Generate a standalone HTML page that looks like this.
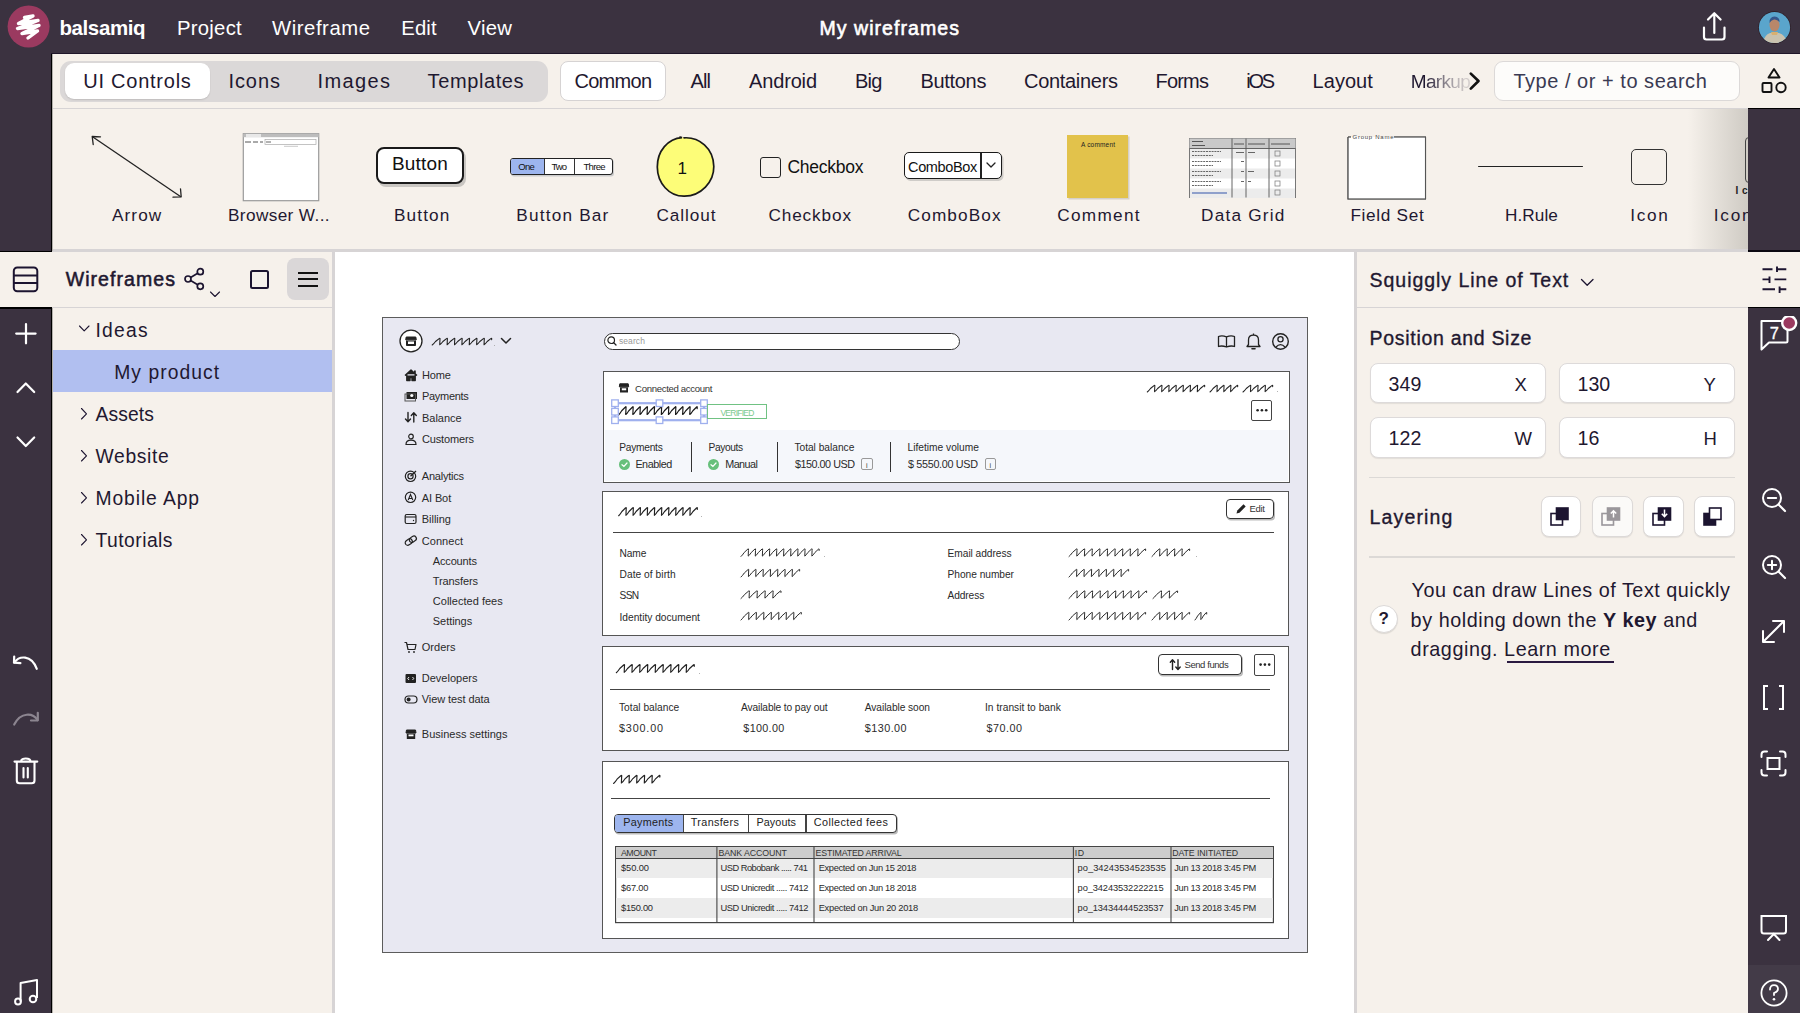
<!DOCTYPE html>
<html><head><meta charset="utf-8"><title>balsamiq</title>
<style>
html,body{margin:0;padding:0;}
body{width:1800px;height:1013px;overflow:hidden;background:#3b3240;position:relative;font-family:"Liberation Sans",sans-serif;}
.a{position:absolute;display:block;}
.t{position:absolute;white-space:nowrap;line-height:1;}
</style></head><body>
<div class="a" style="left:52px;top:54px;width:1748px;height:55px;background:#f6f1eb;"></div>
<div class="a" style="left:52px;top:108px;width:1748px;height:1px;background:#d7d4d5;"></div>
<div class="a" style="left:52px;top:109px;width:1696px;height:141px;background:#f6f1eb;"></div>
<div class="a" style="left:1688px;top:109px;width:60px;height:141px;background:linear-gradient(90deg, rgba(246,241,235,0), #cfcbc4);"></div>
<div class="a" style="left:52px;top:249px;width:1696px;height:3px;background:#d7d4d5;"></div>
<div class="a" style="left:1748px;top:249.5px;width:52px;height:2.5px;background:#0c0812;"></div>
<div class="a" style="left:51px;top:54px;width:1px;height:197px;background:#000;"></div>
<div class="a" style="left:52px;top:54px;width:1px;height:197px;background:#b5b2ad;"></div>
<div class="a" style="left:0px;top:250.5px;width:52px;height:1.5px;background:#000;"></div>
<div class="a" style="left:0px;top:252px;width:333px;height:55px;background:#f6f1eb;"></div>
<div class="a" style="left:0px;top:307px;width:333px;height:1px;background:#d7d4d5;"></div>
<div class="a" style="left:0px;top:307px;width:52px;height:1.5px;background:#000;"></div>
<div class="a" style="left:52px;top:308px;width:280px;height:705px;background:#f6f1eb;"></div>
<div class="a" style="left:51px;top:308px;width:1px;height:705px;background:#000;"></div>
<div class="a" style="left:52px;top:308px;width:1px;height:705px;background:#b5b2ad;"></div>
<div class="a" style="left:332px;top:252px;width:3px;height:761px;background:#d7d4d5;"></div>
<div class="a" style="left:335px;top:252px;width:1019px;height:761px;background:#ffffff;"></div>
<div class="a" style="left:1354px;top:252px;width:3px;height:761px;background:#d7d4d5;"></div>
<div class="a" style="left:1357px;top:252px;width:443px;height:55px;background:#f6f1eb;"></div>
<div class="a" style="left:1357px;top:307px;width:391px;height:706px;background:#f6f1eb;"></div>
<div class="a" style="left:1357px;top:307px;width:443px;height:1px;background:#d7d4d5;"></div>
<div class="a" style="left:1748px;top:108px;width:52px;height:1.2px;background:#000;"></div>
<div class="a" style="left:1747.5px;top:108px;width:1.2px;height:143px;background:#000;"></div>
<div class="a" style="left:1748px;top:306.5px;width:52px;height:1px;background:#000;"></div>
<div class="a" style="left:1748px;top:965px;width:52px;height:48px;background:#433b48;"></div>
<div class="a" style="left:51px;top:52.6px;width:1749px;height:1.5px;background:#1f1629;"></div>
<svg class="a" style="left:6px;top:5px" width="44" height="44" viewBox="0 0 44 44">
<circle cx="22.6" cy="21.5" r="21" fill="#9b3a60"/>
<path d="M18.5,12.5 L27,11 L12.5,18.5 L32,15.5 L11.5,23.5 L33,20.5 L16,28.5 L31.5,26 L22,33" fill="none" stroke="#fff" stroke-width="3.4" stroke-linecap="round" stroke-linejoin="round"/>
</svg>
<div class="t" style="left:59.40px;top:18.00px;font-size:20.50px;letter-spacing:-0.381px;font-weight:bold;color:#fff;">balsamiq</div>
<div class="t" style="left:177.00px;top:18.00px;font-size:20.30px;letter-spacing:0.261px;color:#fff;">Project</div>
<div class="t" style="left:272.00px;top:18.00px;font-size:20.30px;letter-spacing:0.552px;color:#fff;">Wireframe</div>
<div class="t" style="left:401.30px;top:18.00px;font-size:20.30px;letter-spacing:0.128px;color:#fff;">Edit</div>
<div class="t" style="left:467.50px;top:18.00px;font-size:20.30px;letter-spacing:0.285px;color:#fff;">View</div>
<div class="t" style="left:819.40px;top:19.00px;font-size:19.50px;letter-spacing:1.062px;color:#fff;-webkit-text-stroke:0.6px #fff;">My wireframes</div>
<svg class="a" style="left:1700px;top:10px;" width="30" height="34" viewBox="0 0 30 34"><path d="M14.3,23 V3.5 M8,9.5 L14.3,3.2 L20.6,9.5" fill="none" stroke="#fff" stroke-width="2.2" stroke-linecap="round" stroke-linejoin="round"/><path d="M4,17.5 V27 Q4,29.5 6.5,29.5 H22 Q24.5,29.5 24.5,27 V17.5" fill="none" stroke="#fff" stroke-width="2.2" stroke-linecap="round"/></svg>
<svg class="a" style="left:1758px;top:11px" width="33" height="33" viewBox="0 0 33 33">
<defs><clipPath id="av"><circle cx="16.5" cy="16.5" r="15.6"/></clipPath></defs>
<circle cx="16.5" cy="16.5" r="16.2" fill="#2a1a20"/>
<g clip-path="url(#av)">
<rect width="33" height="33" fill="#5aa5cc"/>
<path d="M4,34 Q6,24 12,22 L21,22 Q28,24 30,34 Z" fill="#c9c2ae"/>
<path d="M13,21 L20,21 L19,24 L14,24 Z" fill="#d8b070"/>
<ellipse cx="16.5" cy="14" rx="5" ry="6.5" fill="#b8876a"/>
<path d="M11.5,12 Q11,6 16.5,5.5 Q22,6 21.5,11 Q19,8 16,8.5 Q13,9 11.5,12 Z" fill="#35568a"/>
</g></svg>
<div class="a" style="left:59.5px;top:60.5px;width:488px;height:41.5px;background:#dbd8d8;border-radius:11px;"></div>
<div class="a" style="left:64.7px;top:63.3px;width:145px;height:36px;background:#fff;border-radius:9px;box-shadow:0 1px 1.5px rgba(0,0,0,0.12);"></div>
<div class="t" style="left:83.30px;top:71.00px;font-size:20.00px;letter-spacing:0.750px;color:#1f1830;">UI Controls</div>
<div class="t" style="left:228.40px;top:71.00px;font-size:20.00px;letter-spacing:0.950px;color:#1f1830;">Icons</div>
<div class="t" style="left:317.60px;top:71.00px;font-size:20.00px;letter-spacing:1.360px;color:#1f1830;">Images</div>
<div class="t" style="left:427.60px;top:71.00px;font-size:20.00px;letter-spacing:0.600px;color:#1f1830;">Templates</div>
<div class="a" style="left:560.4px;top:60.6px;width:105.2px;height:40.8px;background:#fff;border-radius:8px;box-sizing:border-box;border:1px solid #d6d3d3;"></div>
<div class="t" style="left:574.40px;top:71.00px;font-size:20.00px;letter-spacing:-0.700px;color:#1f1830;">Common</div>
<div class="t" style="left:690.60px;top:71.00px;font-size:20.00px;letter-spacing:-0.900px;color:#1f1830;">All</div>
<div class="t" style="left:749.00px;top:71.00px;font-size:20.00px;letter-spacing:-0.150px;color:#1f1830;">Android</div>
<div class="t" style="left:855.00px;top:71.00px;font-size:20.00px;letter-spacing:-0.750px;color:#1f1830;">Big</div>
<div class="t" style="left:920.40px;top:71.00px;font-size:20.00px;letter-spacing:-0.300px;color:#1f1830;">Buttons</div>
<div class="t" style="left:1024.00px;top:71.00px;font-size:20.00px;letter-spacing:-0.300px;color:#1f1830;">Containers</div>
<div class="t" style="left:1155.60px;top:71.00px;font-size:20.00px;letter-spacing:-0.825px;color:#1f1830;">Forms</div>
<div class="t" style="left:1246.30px;top:71.00px;font-size:20.00px;letter-spacing:-2.300px;color:#1f1830;">iOS</div>
<div class="t" style="left:1312.60px;top:71.00px;font-size:20.00px;letter-spacing:0.020px;color:#1f1830;">Layout</div>
<div class="t" style="left:1410.80px;top:72.00px;font-size:19.00px;letter-spacing:-0.673px;color:#1f1830;-webkit-mask-image:linear-gradient(90deg,#000 0px,#000 14px,rgba(0,0,0,0.55) 32px,rgba(0,0,0,0.3) 45px,rgba(0,0,0,0.12) 60px);">Markup</div>
<svg class="a" style="left:1466px;top:69px;" width="18" height="24" viewBox="0 0 18 24"><path d="M4.8,4.6 L12.5,12 L4.8,19.6" fill="none" stroke="#111" stroke-width="2.7" stroke-linecap="round" stroke-linejoin="round"/></svg>
<div class="a" style="left:1494.4px;top:60.5px;width:246px;height:40.3px;background:#fdfcfa;border-radius:9px;box-sizing:border-box;border:1px solid #dcd9d8;"></div>
<div class="t" style="left:1513.40px;top:71.00px;font-size:20.00px;letter-spacing:0.525px;color:#3a3a52;">Type / or + to search</div>
<svg class="a" style="left:1759px;top:66px;" width="30" height="30" viewBox="0 0 30 30"><path d="M15,3 L20.5,11.5 H9.5 Z" fill="none" stroke="#111" stroke-width="1.9" stroke-linejoin="round"/><rect x="3.5" y="17" width="9" height="9" rx="1" fill="none" stroke="#111" stroke-width="1.9"/><circle cx="22" cy="21.5" r="4.7" fill="none" stroke="#111" stroke-width="1.9"/></svg>
<div class="t" style="left:112.00px;top:207.00px;font-size:17.20px;letter-spacing:1.080px;color:#1f1830;">Arrow</div>
<div class="t" style="left:228.00px;top:207.00px;font-size:17.20px;letter-spacing:0.380px;color:#1f1830;">Browser W...</div>
<div class="t" style="left:393.90px;top:207.00px;font-size:17.20px;letter-spacing:1.158px;color:#1f1830;">Button</div>
<div class="t" style="left:516.30px;top:207.00px;font-size:17.20px;letter-spacing:1.203px;color:#1f1830;">Button Bar</div>
<div class="t" style="left:656.50px;top:207.00px;font-size:17.20px;letter-spacing:0.920px;color:#1f1830;">Callout</div>
<div class="t" style="left:768.40px;top:207.00px;font-size:17.20px;letter-spacing:0.892px;color:#1f1830;">Checkbox</div>
<div class="t" style="left:907.70px;top:207.00px;font-size:17.20px;letter-spacing:1.121px;color:#1f1830;">ComboBox</div>
<div class="t" style="left:1057.30px;top:207.00px;font-size:17.20px;letter-spacing:1.290px;color:#1f1830;">Comment</div>
<div class="t" style="left:1201.10px;top:207.00px;font-size:17.20px;letter-spacing:1.210px;color:#1f1830;">Data Grid</div>
<div class="t" style="left:1350.40px;top:207.00px;font-size:17.20px;letter-spacing:0.693px;color:#1f1830;">Field Set</div>
<div class="t" style="left:1504.90px;top:207.00px;font-size:17.20px;letter-spacing:0.091px;color:#1f1830;">H.Rule</div>
<div class="t" style="left:1630.20px;top:207.00px;font-size:17.20px;letter-spacing:1.731px;color:#1f1830;">Icon</div>
<div class="t" style="left:1713.80px;top:207.00px;font-size:17.20px;letter-spacing:1.731px;color:#1f1830;">Icon</div>
<svg class="a" style="left:85px;top:130px;" width="105" height="75" viewBox="0 0 105 75"><path d="M7.5,6.7 L95.8,66.7" stroke="#222" stroke-width="1.3" fill="none"/><path d="M8.2,14.5 L7.2,6.5 L15.5,6.8" fill="none" stroke="#222" stroke-width="1.3" stroke-linecap="round" stroke-linejoin="round"/><path d="M95.5,58.8 L96.2,66.8 L88,67.2" fill="none" stroke="#222" stroke-width="1.3" stroke-linecap="round" stroke-linejoin="round"/></svg>
<svg class="a" style="left:242px;top:133px;" width="78" height="69" viewBox="0 0 78 69"><rect x="1.3" y="0.7" width="75.4" height="67" fill="#fff" stroke="#9a9a9a" stroke-width="1.2"/>
<rect x="1.3" y="0.7" width="75.4" height="3.5" fill="#bdbdbd"/><rect x="4" y="1" width="15" height="3" fill="#e8e8e8"/>
<path d="M3,9 H9 M11,9 H16 M18,9 H21" stroke="#555" stroke-width="1"/><rect x="23" y="6.5" width="51" height="5" fill="#fff" stroke="#aaa" stroke-width="0.7"/>
<path d="M24,9 H29" stroke="#666" stroke-width="1"/><path d="M42,13.3 H56" stroke="#bbb" stroke-width="0.8"/></svg>
<div class="a" style="left:376px;top:146.5px;width:88px;height:37px;box-sizing:border-box;border:2px solid #1a1a1a;border-radius:8px;background:#fff;box-shadow:2px 3px 0 #c9c6c2;"></div>
<div class="t" style="left:391.90px;top:154.00px;font-size:19.00px;letter-spacing:0.218px;color:#111;">Button</div>
<div class="a" style="left:510px;top:158.3px;width:102.7px;height:16.3px;box-sizing:border-box;border:1.3px solid #222;border-radius:3px;background:#fff;overflow:hidden;box-shadow:1px 1.5px 0 #ccc;"><div style="position:absolute;left:0;top:0;width:33px;height:100%;background:#9db5ee;border-right:1.2px solid #333"></div><div style="position:absolute;left:62.5px;top:0;width:1.2px;height:100%;background:#333"></div></div>
<div class="t" style="left:518.30px;top:162.00px;font-size:9.50px;letter-spacing:-0.727px;color:#111;">One</div>
<div class="t" style="left:551.50px;top:162.00px;font-size:9.50px;letter-spacing:-0.966px;color:#111;">Two</div>
<div class="t" style="left:583.50px;top:162.00px;font-size:9.50px;letter-spacing:-0.699px;color:#111;">Three</div>
<svg class="a" style="left:655px;top:135px;" width="62" height="64" viewBox="0 0 62 64"><path d="M29,2.8 C44,1.8 58.5,13 58.8,31.5 C59,47 46,61 29.5,61.2 C14,61.5 2.4,48 2.3,32 C2.2,16 13,3.5 27,2.6 L25,2" fill="#fdfd78" stroke="#1a1a1a" stroke-width="1.7" stroke-linecap="round"/></svg>
<div class="t" style="left:677.50px;top:160.00px;font-size:17.00px;color:#111;">1</div>
<div class="a" style="left:760px;top:156.7px;width:21px;height:21px;box-sizing:border-box;border:1.6px solid #222;border-radius:3px;"></div>
<div class="t" style="left:787.40px;top:159.00px;font-size:17.50px;letter-spacing:-0.255px;color:#111;">Checkbox</div>
<div class="a" style="left:903.5px;top:152.4px;width:98.5px;height:26.4px;box-sizing:border-box;border:1.6px solid #1a1a1a;border-radius:5px;background:#fff;box-shadow:1.5px 2px 0 #cfccc8;"><div style="position:absolute;left:75.5px;top:0;width:1.6px;height:100%;background:#222"></div></div>
<div class="t" style="left:908.00px;top:160.00px;font-size:14.50px;letter-spacing:-0.343px;color:#111;">ComboBox</div>
<svg class="a" style="left:983px;top:158px;" width="16" height="14" viewBox="0 0 16 14"><path d="M4,5 L8,9 L12,5" fill="none" stroke="#222" stroke-width="1.3" stroke-linecap="round" stroke-linejoin="round"/></svg>
<div class="a" style="left:1067.1px;top:135.4px;width:61.3px;height:62.5px;background:#e2c24b;box-shadow:1.5px 1.5px 0 #d5d0c8;"></div>
<div class="t" style="left:1081.00px;top:142.00px;font-size:6.50px;letter-spacing:0.188px;color:#222;">A comment</div>
<svg class="a" style="left:1189px;top:137.5px;" width="107" height="60" viewBox="0 0 107 60"><rect x="0.5" y="0.5" width="106" height="59" fill="#fff" stroke="#777" stroke-width="1"/><rect x="0.5" y="0.5" width="106" height="10" fill="#c9c9c9"/><rect x="1" y="10.5" width="105" height="10" fill="#ececec"/><rect x="1" y="30.5" width="105" height="10" fill="#ececec"/><rect x="1" y="50.5" width="105" height="10" fill="#ececec"/><path d="M43,0.5 V59.5" stroke="#555" stroke-width="0.9"/><path d="M57,0.5 V59.5" stroke="#555" stroke-width="0.9"/><path d="M80,0.5 V59.5" stroke="#555" stroke-width="0.9"/><path d="M0.5,10.5 H106.5" stroke="#555" stroke-width="0.9"/><path d="M3,13.5 H32 M3,17.5 H24" stroke="#666" stroke-width="1.1" stroke-dasharray="2 0.8"/><rect x="86" y="13.0" width="5" height="5" fill="none" stroke="#777" stroke-width="0.7"/><path d="M3,23.5 H32 M3,27.5 H24" stroke="#666" stroke-width="1.1" stroke-dasharray="2 0.8"/><rect x="86" y="23.0" width="5" height="5" fill="none" stroke="#777" stroke-width="0.7"/><path d="M3,33.5 H32 M3,37.5 H24" stroke="#666" stroke-width="1.1" stroke-dasharray="2 0.8"/><rect x="86" y="33.0" width="5" height="5" fill="none" stroke="#777" stroke-width="0.7"/><path d="M3,43.5 H32 M3,47.5 H24" stroke="#666" stroke-width="1.1" stroke-dasharray="2 0.8"/><rect x="86" y="43.0" width="5" height="5" fill="none" stroke="#777" stroke-width="0.7"/><path d="M3,55 H38" stroke="#3355aa" stroke-width="1"/><rect x="86" y="52" width="5" height="5" fill="none" stroke="#777" stroke-width="0.7"/><path d="M3,3.5 H14 M3,7.5 H16 M45,6 H55 M59,6 H76 M82,6 H101" stroke="#555" stroke-width="1"/><path d="M47,14.5 H55 M59,14.5 H66 M59,33.5 H65 M59,43.5 H62 M52,23.5 H55 M52,33.5 H55 M52,43.5 H55" stroke="#666" stroke-width="1"/></svg>
<svg class="a" style="left:1347px;top:135px;" width="80" height="66" viewBox="0 0 80 66"><path d="M1,2 H4 M47,2 H78.5 V64 H1 V2" fill="#fff" stroke="#555" stroke-width="1.1"/><rect x="1.5" y="2.5" width="76.5" height="61" fill="#fff"/><path d="M1,2 H4 M47,2 H78.5 V64 H1 V2" fill="none" stroke="#555" stroke-width="1.1"/></svg>
<div class="t" style="left:1352.50px;top:134.00px;font-size:6.00px;letter-spacing:0.739px;color:#444;">Group Name</div>
<div class="a" style="left:1477.7px;top:165.7px;width:105px;height:1.6px;background:#222;border-radius:1px;"></div>
<div class="a" style="left:1631px;top:149px;width:36.2px;height:35.6px;box-sizing:border-box;border:1.3px solid #333;border-radius:5px;"></div>
<div class="a" style="left:1744.5px;top:137px;width:20px;height:46px;box-sizing:border-box;border:1.2px solid #444;border-radius:4px;"></div>
<div class="t" style="left:1735.50px;top:186.00px;font-size:10.00px;letter-spacing:3.650px;font-weight:bold;color:#222;">Ic</div>
<div class="a" style="left:1748px;top:109.2px;width:52px;height:141.3px;background:#3b3240;"></div>
<svg class="a" style="left:12px;top:266px;" width="27" height="27" viewBox="0 0 27 27"><rect x="1.8" y="1.5" width="23.5" height="23.8" rx="3.5" fill="none" stroke="#1c1430" stroke-width="2"/><path d="M1.8,9.4 H25.3 M1.8,17.1 H25.3" stroke="#1c1430" stroke-width="2"/></svg>
<div class="t" style="left:65.70px;top:270.00px;font-size:19.50px;letter-spacing:1.062px;color:#1f1830;-webkit-text-stroke:0.55px #1f1830;">Wireframes</div>
<svg class="a" style="left:183px;top:267px;" width="24" height="25" viewBox="0 0 24 25"><circle cx="17.3" cy="4.7" r="3" fill="none" stroke="#1c1430" stroke-width="1.7"/><circle cx="5" cy="12" r="3" fill="none" stroke="#1c1430" stroke-width="1.7"/><circle cx="17.3" cy="19.3" r="3" fill="none" stroke="#1c1430" stroke-width="1.7"/><path d="M7.6,10.4 L14.7,6.3 M7.6,13.6 L14.7,17.7" stroke="#1c1430" stroke-width="1.7"/></svg>
<svg class="a" style="left:208px;top:289px;" width="14" height="10" viewBox="0 0 14 10"><path d="M2.5,3 L7,7.5 L11.5,3" fill="none" stroke="#1c1430" stroke-width="1.1" stroke-linecap="round" stroke-linejoin="round"/></svg>
<div class="a" style="left:250.3px;top:270px;width:19.2px;height:18.6px;box-sizing:border-box;border:2px solid #1c1430;border-radius:2.5px;"></div>
<div class="a" style="left:287px;top:258.4px;width:41.5px;height:41.7px;background:#dad7d8;border-radius:8px;"></div>
<div class="a" style="left:298px;top:272.4px;width:19.6px;height:2px;background:#111;"></div>
<div class="a" style="left:298px;top:278.4px;width:19.6px;height:2px;background:#111;"></div>
<div class="a" style="left:298px;top:284.5px;width:19.6px;height:2px;background:#111;"></div>
<div class="a" style="left:52.5px;top:350.3px;width:279.5px;height:41.8px;background:#b1bff0;"></div>
<div class="t" style="left:95.50px;top:321.00px;font-size:19.30px;letter-spacing:1.253px;color:#1f1830;">Ideas</div>
<div class="t" style="left:114.20px;top:363.00px;font-size:19.30px;letter-spacing:1.051px;color:#1f1830;">My product</div>
<div class="t" style="left:95.50px;top:405.00px;font-size:19.30px;letter-spacing:0.120px;color:#1f1830;">Assets</div>
<div class="t" style="left:95.50px;top:447.00px;font-size:19.30px;letter-spacing:0.669px;color:#1f1830;">Website</div>
<div class="t" style="left:95.50px;top:489.00px;font-size:19.30px;letter-spacing:0.907px;color:#1f1830;">Mobile App</div>
<div class="t" style="left:95.50px;top:531.00px;font-size:19.30px;letter-spacing:0.470px;color:#1f1830;">Tutorials</div>
<svg class="a" style="left:76px;top:322px;" width="16" height="14" viewBox="0 0 16 14"><path d="M3.5,4 L8.2,8.8 L13,4" fill="none" stroke="#1c1430" stroke-width="1.1" stroke-linecap="round" stroke-linejoin="round"/></svg>
<svg class="a" style="left:78px;top:406.5px;" width="12" height="14" viewBox="0 0 12 14"><path d="M3.5,1.5 L8.5,6.8 L3.5,12" fill="none" stroke="#1c1430" stroke-width="1.1" stroke-linecap="round" stroke-linejoin="round"/></svg>
<svg class="a" style="left:78px;top:448.5px;" width="12" height="14" viewBox="0 0 12 14"><path d="M3.5,1.5 L8.5,6.8 L3.5,12" fill="none" stroke="#1c1430" stroke-width="1.1" stroke-linecap="round" stroke-linejoin="round"/></svg>
<svg class="a" style="left:78px;top:490.5px;" width="12" height="14" viewBox="0 0 12 14"><path d="M3.5,1.5 L8.5,6.8 L3.5,12" fill="none" stroke="#1c1430" stroke-width="1.1" stroke-linecap="round" stroke-linejoin="round"/></svg>
<svg class="a" style="left:78px;top:532.5px;" width="12" height="14" viewBox="0 0 12 14"><path d="M3.5,1.5 L8.5,6.8 L3.5,12" fill="none" stroke="#1c1430" stroke-width="1.1" stroke-linecap="round" stroke-linejoin="round"/></svg>
<svg class="a" style="left:13px;top:321px;" width="26" height="26" viewBox="0 0 26 26"><path d="M13,3 V22.3 M3.2,12.6 H22.6" stroke="#fff" stroke-width="2.2" stroke-linecap="round"/></svg>
<svg class="a" style="left:13px;top:378px;" width="26" height="20" viewBox="0 0 26 20"><path d="M4.5,14 L12.8,5.5 L21.2,14" fill="none" stroke="#fff" stroke-width="2.2" stroke-linecap="round" stroke-linejoin="round"/></svg>
<svg class="a" style="left:13px;top:432px;" width="26" height="20" viewBox="0 0 26 20"><path d="M4.5,5.5 L12.8,14 L21.2,5.5" fill="none" stroke="#fff" stroke-width="2.2" stroke-linecap="round" stroke-linejoin="round"/></svg>
<svg class="a" style="left:11px;top:652px;" width="30" height="22" viewBox="0 0 30 22"><path d="M3.5,10.3 C8,4 20,2 25.8,16.8" fill="none" stroke="#fff" stroke-width="2.2" stroke-linecap="round"/><path d="M3.2,4.5 L3,10.7 L9.4,11.2" fill="none" stroke="#fff" stroke-width="2.2" stroke-linecap="round" stroke-linejoin="round"/></svg>
<svg class="a" style="left:11px;top:708px;" width="30" height="22" viewBox="0 0 30 22"><path d="M26.5,12 C22,5 10,3.5 3.2,16.5" fill="none" stroke="#8c8590" stroke-width="2.2" stroke-linecap="round"/><path d="M26.8,4.8 L26.8,12.3 L20,12.5" fill="none" stroke="#8c8590" stroke-width="2.2" stroke-linecap="round" stroke-linejoin="round"/></svg>
<svg class="a" style="left:11px;top:756px;" width="30" height="32" viewBox="0 0 30 32"><path d="M3.5,5.6 H26.3 M10,5.4 C10,1.5 19.5,1.5 19.5,5.4" fill="none" stroke="#fff" stroke-width="2.1" stroke-linecap="round"/><path d="M5.8,6 V24.5 Q5.8,27.3 8.6,27.3 H20.7 Q23.5,27.3 23.5,24.5 V6" fill="none" stroke="#fff" stroke-width="2.1"/><path d="M12.5,12 V21.5 M16.8,12 V21.5" stroke="#fff" stroke-width="2.1" stroke-linecap="round"/></svg>
<svg class="a" style="left:11px;top:978px;" width="30" height="30" viewBox="0 0 30 30"><path d="M9.6,23.5 V5 L26,2 V20" fill="none" stroke="#fff" stroke-width="2" stroke-linejoin="round"/><circle cx="7" cy="23.5" r="2.9" fill="none" stroke="#fff" stroke-width="2"/><circle cx="22" cy="21" r="3.3" fill="none" stroke="#fff" stroke-width="2"/></svg>
<div class="t" style="left:1369.60px;top:271.00px;font-size:19.50px;letter-spacing:0.955px;color:#1f1830;-webkit-text-stroke:0.35px #1f1830;">Squiggly Line of Text</div>
<svg class="a" style="left:1578px;top:275px;" width="18" height="14" viewBox="0 0 18 14"><path d="M3.5,4.5 L9.2,10.2 L15,4.5" fill="none" stroke="#1c1430" stroke-width="1.3" stroke-linecap="round" stroke-linejoin="round"/></svg>
<svg class="a" style="left:1760px;top:264px;" width="30" height="32" viewBox="0 0 30 32"><path d="M2.5,5.2 H12.5 M17,5.2 H26.3 M17,2.6 V8 M2.5,15.4 H10 M14.5,15.4 H26.3 M9.5,12.5 V19 M2.5,25.3 H15 M19.6,25.3 H26.3 M19.6,22.5 V28.9" fill="none" stroke="#1c1430" stroke-width="1.9"/></svg>
<div class="t" style="left:1369.60px;top:329.00px;font-size:19.50px;letter-spacing:0.698px;color:#1f1830;-webkit-text-stroke:0.35px #1f1830;">Position and Size</div>
<div class="a" style="left:1369.6px;top:362.9px;width:176px;height:40.5px;box-sizing:border-box;border:1px solid #dddada;border-radius:8px;background:#fff;box-shadow:0 1px 1px rgba(0,0,0,0.08);"></div>
<div class="t" style="left:1388.60px;top:375.00px;font-size:19.60px;color:#1f1830;">349</div>
<div class="t" style="left:1514.60px;top:376.00px;font-size:18.50px;color:#1f1830;">X</div>
<div class="a" style="left:1558.5px;top:362.9px;width:176px;height:40.5px;box-sizing:border-box;border:1px solid #dddada;border-radius:8px;background:#fff;box-shadow:0 1px 1px rgba(0,0,0,0.08);"></div>
<div class="t" style="left:1577.50px;top:375.00px;font-size:19.60px;color:#1f1830;">130</div>
<div class="t" style="left:1703.50px;top:376.00px;font-size:18.50px;color:#1f1830;">Y</div>
<div class="a" style="left:1369.6px;top:417.1px;width:176px;height:40.5px;box-sizing:border-box;border:1px solid #dddada;border-radius:8px;background:#fff;box-shadow:0 1px 1px rgba(0,0,0,0.08);"></div>
<div class="t" style="left:1388.60px;top:429.00px;font-size:19.60px;color:#1f1830;">122</div>
<div class="t" style="left:1514.60px;top:430.00px;font-size:18.50px;color:#1f1830;">W</div>
<div class="a" style="left:1558.5px;top:417.1px;width:176px;height:40.5px;box-sizing:border-box;border:1px solid #dddada;border-radius:8px;background:#fff;box-shadow:0 1px 1px rgba(0,0,0,0.08);"></div>
<div class="t" style="left:1577.50px;top:429.00px;font-size:19.60px;color:#1f1830;">16</div>
<div class="t" style="left:1703.50px;top:430.00px;font-size:18.50px;color:#1f1830;">H</div>
<div class="a" style="left:1369px;top:476.5px;width:366px;height:1.5px;background:#dcd9d6;"></div>
<div class="t" style="left:1369.60px;top:508.00px;font-size:19.50px;letter-spacing:1.131px;color:#1f1830;-webkit-text-stroke:0.35px #1f1830;">Layering</div>
<div class="a" style="left:1540.7px;top:496.4px;width:40.5px;height:40.3px;box-sizing:border-box;border:1px solid #dcd9d8;border-radius:8px;background:#fff;box-shadow:0 1px 1px rgba(0,0,0,0.08);"></div>
<div class="a" style="left:1592.1px;top:496.4px;width:40.5px;height:40.3px;box-sizing:border-box;border:1px solid #dcd9d8;border-radius:8px;background:#fbfaf8;box-shadow:0 1px 1px rgba(0,0,0,0.08);"></div>
<div class="a" style="left:1643px;top:496.4px;width:40.5px;height:40.3px;box-sizing:border-box;border:1px solid #dcd9d8;border-radius:8px;background:#fff;box-shadow:0 1px 1px rgba(0,0,0,0.08);"></div>
<div class="a" style="left:1694px;top:496.4px;width:40.5px;height:40.3px;box-sizing:border-box;border:1px solid #dcd9d8;border-radius:8px;background:#fff;box-shadow:0 1px 1px rgba(0,0,0,0.08);"></div>
<svg class="a" style="left:1548px;top:504px;" width="26" height="26" viewBox="0 0 26 26"><rect x="3" y="9.5" width="11.5" height="11.5" fill="#fff" stroke="#1c1430" stroke-width="1.6"/><rect x="8.5" y="4" width="11.5" height="11.5" fill="#1c1430" stroke="#1c1430" stroke-width="1.6"/></svg>
<svg class="a" style="left:1599px;top:504px;" width="26" height="26" viewBox="0 0 26 26"><rect x="3" y="9.5" width="11.5" height="11.5" fill="none" stroke="#9a979b" stroke-width="1.6"/><rect x="8.5" y="4" width="12" height="12" fill="#9a979b" stroke="#9a979b" stroke-width="1.6"/><path d="M14.5,13.5 V7 M11.8,9.6 L14.5,6.8 L17.2,9.6" fill="none" stroke="#fff" stroke-width="1.5"/></svg>
<svg class="a" style="left:1650px;top:504px;" width="26" height="26" viewBox="0 0 26 26"><rect x="3" y="9.5" width="11.5" height="11.5" fill="none" stroke="#1c1430" stroke-width="1.6"/><rect x="8.5" y="4" width="12" height="12" fill="#1c1430" stroke="#1c1430" stroke-width="1.6"/><path d="M14.5,5.5 V12.5 M11.8,9.8 L14.5,12.6 L17.2,9.8" fill="none" stroke="#fff" stroke-width="1.5"/></svg>
<svg class="a" style="left:1701px;top:504px;" width="26" height="26" viewBox="0 0 26 26"><rect x="3" y="9.5" width="11.5" height="11.5" fill="#1c1430" stroke="#1c1430" stroke-width="1.6"/><rect x="8.5" y="4" width="11.5" height="11.5" fill="#fff" stroke="#1c1430" stroke-width="1.6"/></svg>
<div class="a" style="left:1369px;top:556px;width:366px;height:1.5px;background:#dcd9d6;"></div>
<div class="a" style="left:1369.6px;top:605.4px;width:28px;height:28px;box-sizing:border-box;border:1px solid #dcd9d8;border-radius:50%;background:#fff;box-shadow:0 1px 1px rgba(0,0,0,0.1);"></div>
<div class="t" style="left:1378.50px;top:610.00px;font-size:17.00px;font-weight:bold;color:#1f1830;">?</div>
<div class="t" style="left:1411.60px;top:581.00px;font-size:19.80px;letter-spacing:0.514px;color:#1f1830;">You can draw Lines of Text quickly</div>
<div class="t" style="left:1410.6px;top:611px;font-size:19.8px;letter-spacing:0.55px;color:#1f1830;white-space:nowrap">by holding down the <b>Y key</b> and</div>
<div class="t" style="left:1410.6px;top:640px;font-size:19.8px;letter-spacing:0.55px;color:#1f1830;white-space:nowrap">dragging. Learn more</div>
<div class="a" style="left:1506.5px;top:661px;width:107.3px;height:1.8px;background:#2a1a40;"></div>
<svg class="a" style="left:1759px;top:316px;" width="40" height="38" viewBox="0 0 40 38"><path d="M2.5,5 H27 Q28.5,5 28.5,6.5 V25 Q28.5,26.5 27,26.5 H10 L2.5,33.5 Z" fill="none" stroke="#fff" stroke-width="2" stroke-linejoin="round"/><circle cx="30.2" cy="7" r="8.2" fill="#fff"/><circle cx="30.2" cy="7" r="5.8" fill="#9b3a60"/></svg>
<div class="t" style="left:1769.80px;top:325.00px;font-size:16.50px;color:#fff;-webkit-text-stroke:0.3px #fff;">7</div>
<svg class="a" style="left:1761px;top:486.5px;" width="28" height="28" viewBox="0 0 28 28"><circle cx="11" cy="11" r="9" fill="none" stroke="#fff" stroke-width="2"/><path d="M17.5,17.5 L24,24" stroke="#fff" stroke-width="2.2" stroke-linecap="round"/><path d="M6.8,11 H15.2" stroke="#fff" stroke-width="2" stroke-linecap="round"/></svg>
<svg class="a" style="left:1761px;top:553.8px;" width="28" height="28" viewBox="0 0 28 28"><circle cx="11" cy="11" r="9" fill="none" stroke="#fff" stroke-width="2"/><path d="M17.5,17.5 L24,24" stroke="#fff" stroke-width="2.2" stroke-linecap="round"/><path d="M6.8,11 H15.2" stroke="#fff" stroke-width="2" stroke-linecap="round"/><path d="M11,6.8 V15.2" stroke="#fff" stroke-width="2" stroke-linecap="round"/></svg>
<svg class="a" style="left:1759px;top:617px;" width="30" height="30" viewBox="0 0 30 30"><path d="M4,25 L25,4 M14,4 H25 V15 M4,14 V25 H15" fill="none" stroke="#fff" stroke-width="2" stroke-linecap="round" stroke-linejoin="round"/></svg>
<svg class="a" style="left:1759px;top:683px;" width="30" height="30" viewBox="0 0 30 30"><path d="M9,3 H5 V26 H9 M20,3 H24 V26 H20" fill="none" stroke="#fff" stroke-width="2"/></svg>
<svg class="a" style="left:1759px;top:749px;" width="30" height="30" viewBox="0 0 30 30"><path d="M2.5,8 V5.5 Q2.5,2.5 5.5,2.5 H8 M21,2.5 H23.5 Q26.5,2.5 26.5,5.5 V8 M26.5,21 V23.5 Q26.5,26.5 23.5,26.5 H21 M8,26.5 H5.5 Q2.5,26.5 2.5,23.5 V21" fill="none" stroke="#fff" stroke-width="2" stroke-linecap="round"/><rect x="8.5" y="9" width="12" height="11" fill="none" stroke="#fff" stroke-width="2"/></svg>
<svg class="a" style="left:1759px;top:913px;" width="30" height="30" viewBox="0 0 30 30"><path d="M2.5,3 H27 V18 Q27,20.5 24.5,20.5 H5 Q2.5,20.5 2.5,18 Z" fill="none" stroke="#fff" stroke-width="2"/><path d="M9,27 L14.8,21 L20.5,27" fill="none" stroke="#fff" stroke-width="2" stroke-linecap="round"/></svg>
<svg class="a" style="left:1759px;top:977px;" width="30" height="32" viewBox="0 0 30 32"><circle cx="15" cy="16" r="12.6" fill="none" stroke="#fff" stroke-width="1.8"/><path d="M11,12.5 Q11,8.2 15,8.2 Q19,8.2 19,12 Q19,14.5 15,16 V18" fill="none" stroke="#fff" stroke-width="1.8" stroke-linecap="round"/><circle cx="15" cy="22.3" r="1.3" fill="#fff"/></svg>
<div class="a" style="left:382px;top:317.3px;width:926px;height:636px;background:#e8e8f2;box-sizing:border-box;border:1.6px solid #5c5c5c;"></div>
<svg class="a" style="left:398px;top:328px;" width="27" height="27" viewBox="0 0 27 27"><ellipse cx="13" cy="13" rx="11" ry="10.8" fill="#fff" stroke="#222" stroke-width="1.3"/><path d="M8.2,9 H17.8 L18.3,11.8 H7.7 Z M8.5,12.5 V17.5 H17.5 V12.5" fill="#222" stroke="#222" stroke-width="1"/><rect x="10" y="13.5" width="6" height="2.5" fill="#fff"/></svg>
<svg class="a" style="left:430px;top:333px;" width="70" height="16" viewBox="0 0 70 16"><path d="M2.20,12.00 Q3.68,10.95 5.52,8.50 L9.44,5.42 Q10.32,4.65 9.95,6.75 L9.73,11.65 Q11.06,10.95 12.90,8.50 L16.82,5.42 Q17.70,4.65 17.33,6.75 L17.11,11.65 Q18.44,10.95 20.29,8.50 L24.20,5.42 Q25.09,4.65 24.72,6.75 L24.50,11.65 Q25.82,10.95 27.67,8.50 L31.58,5.42 Q32.47,4.65 32.10,6.75 L31.88,11.65 Q33.21,10.95 35.05,8.50 L38.97,5.42 Q39.85,4.65 39.48,6.75 L39.26,11.65 Q40.59,10.95 42.44,8.50 L46.35,5.42 Q47.23,4.65 46.87,6.75 L46.64,11.65 Q47.97,10.95 49.82,8.50 L53.73,5.42 Q54.62,4.65 54.25,6.75 L54.03,11.65 Q55.36,10.95 57.20,8.50 L61.11,5.42 Q62.00,4.65 61.63,6.75" fill="none" stroke="#222" stroke-width="1.1" stroke-linecap="round" stroke-linejoin="round"/></svg>
<svg class="a" style="left:498px;top:334px;" width="16" height="12" viewBox="0 0 16 12"><path d="M3.5,4.5 L8,9 L12.5,4.5" fill="none" stroke="#222" stroke-width="1.5" stroke-linecap="round" stroke-linejoin="round"/></svg>
<div class="a" style="left:604px;top:332.6px;width:355.5px;height:17px;box-sizing:border-box;border:1.3px solid #333;border-radius:9px;background:#fff;"></div>
<svg class="a" style="left:606px;top:335px;" width="12" height="12" viewBox="0 0 12 12"><circle cx="5.2" cy="5.2" r="3.3" fill="none" stroke="#222" stroke-width="1.2"/><path d="M7.6,7.6 L10,10" stroke="#222" stroke-width="1.3" stroke-linecap="round"/></svg>
<div class="t" style="left:618.90px;top:337.00px;font-size:8.50px;letter-spacing:0.100px;color:#999;">search</div>
<svg class="a" style="left:1216px;top:333px;" width="22" height="18" viewBox="0 0 22 18"><path d="M2.5,3.5 Q6,2 10.5,3.8 Q15,2 18.5,3.5 V13.5 Q15,12.3 10.5,14 Q6,12.3 2.5,13.5 Z M10.5,3.8 V14" fill="none" stroke="#222" stroke-width="1.3" stroke-linejoin="round"/></svg>
<svg class="a" style="left:1244px;top:332px;" width="19" height="20" viewBox="0 0 19 20"><path d="M3,14.5 H16 L14.5,12.5 V8 Q14.5,3.2 9.5,3.2 Q4.5,3.2 4.5,8 V12.5 Z" fill="none" stroke="#222" stroke-width="1.3" stroke-linejoin="round"/><path d="M9.5,1.5 V3" stroke="#222" stroke-width="1.3"/><path d="M8,16.8 H11" stroke="#222" stroke-width="1.6" stroke-linecap="round"/></svg>
<svg class="a" style="left:1270px;top:331px;" width="21" height="21" viewBox="0 0 21 21"><circle cx="10.5" cy="10.5" r="7.8" fill="none" stroke="#222" stroke-width="1.4"/><circle cx="10.5" cy="8.3" r="2.6" fill="none" stroke="#222" stroke-width="1.3"/><path d="M5.8,16.2 Q10.5,11 15.2,16.2" fill="none" stroke="#222" stroke-width="1.3"/></svg>
<div class="t" style="left:422.00px;top:370.00px;font-size:11.00px;letter-spacing:-0.190px;color:#2a2a2a;">Home</div>
<div class="t" style="left:422.00px;top:391.00px;font-size:11.00px;letter-spacing:-0.299px;color:#2a2a2a;">Payments</div>
<div class="t" style="left:422.00px;top:413.00px;font-size:11.00px;letter-spacing:-0.027px;color:#2a2a2a;">Balance</div>
<div class="t" style="left:422.00px;top:434.00px;font-size:11.00px;letter-spacing:-0.148px;color:#2a2a2a;">Customers</div>
<div class="t" style="left:421.80px;top:471.00px;font-size:11.00px;letter-spacing:-0.213px;color:#2a2a2a;">Analytics</div>
<div class="t" style="left:421.80px;top:493.00px;font-size:11.00px;letter-spacing:-0.115px;color:#2a2a2a;">AI Bot</div>
<div class="t" style="left:421.80px;top:514.00px;font-size:11.00px;letter-spacing:-0.028px;color:#2a2a2a;">Billing</div>
<div class="t" style="left:421.80px;top:536.00px;font-size:11.00px;letter-spacing:0.038px;color:#2a2a2a;">Connect</div>
<div class="t" style="left:432.80px;top:556.00px;font-size:11.00px;letter-spacing:-0.166px;color:#2a2a2a;">Accounts</div>
<div class="t" style="left:432.80px;top:576.00px;font-size:11.00px;letter-spacing:-0.104px;color:#2a2a2a;">Transfers</div>
<div class="t" style="left:432.80px;top:596.00px;font-size:11.00px;letter-spacing:0.017px;color:#2a2a2a;">Collected fees</div>
<div class="t" style="left:432.80px;top:616.00px;font-size:11.00px;letter-spacing:-0.052px;color:#2a2a2a;">Settings</div>
<div class="t" style="left:421.80px;top:642.00px;font-size:11.00px;letter-spacing:0.019px;color:#2a2a2a;">Orders</div>
<div class="t" style="left:421.80px;top:673.00px;font-size:11.00px;color:#2a2a2a;">Developers</div>
<div class="t" style="left:421.80px;top:694.00px;font-size:11.00px;letter-spacing:-0.086px;color:#2a2a2a;">View test data</div>
<div class="t" style="left:421.80px;top:729.00px;font-size:11.00px;color:#2a2a2a;">Business settings</div>
<svg class="a" style="left:403px;top:368px;" width="16" height="14" viewBox="0 0 16 14"><path d="M2,7.5 L8,2 L14,7.5 M3.8,6.2 V12.5 H7 V9.5 H9 V12.5 H12.2 V6.2" fill="#222" stroke="#222" stroke-width="1.4" stroke-linejoin="round"/><rect x="11" y="2.5" width="1.8" height="3" fill="#222"/></svg>
<svg class="a" style="left:403px;top:389px;" width="16" height="14" viewBox="0 0 16 14"><rect x="3.5" y="3" width="10.5" height="7" fill="#222"/><rect x="2" y="5" width="10.5" height="7" fill="none" stroke="#555" stroke-width="1"/><circle cx="8.8" cy="6.5" r="1.6" fill="#fff"/></svg>
<svg class="a" style="left:403px;top:410px;" width="16" height="14" viewBox="0 0 16 14"><path d="M5,2.5 V11.5 M2.5,9 L5,11.7 L7.5,9 M10.8,12 V3 M8.3,5.5 L10.8,2.8 L13.3,5.5" fill="none" stroke="#222" stroke-width="1.4" stroke-linecap="round" stroke-linejoin="round"/></svg>
<svg class="a" style="left:403px;top:432px;" width="16" height="14" viewBox="0 0 16 14"><circle cx="8" cy="4.5" r="2.3" fill="none" stroke="#222" stroke-width="1.2"/><path d="M3,12.5 Q3,8.2 8,8.2 Q13,8.2 13,12.5 Z" fill="none" stroke="#222" stroke-width="1.2"/></svg>
<svg class="a" style="left:403px;top:469px;" width="16" height="14" viewBox="0 0 16 14"><circle cx="7.5" cy="7.3" r="5.2" fill="none" stroke="#222" stroke-width="1.2"/><circle cx="7.5" cy="7.3" r="2.6" fill="none" stroke="#222" stroke-width="1.2"/><path d="M7.5,7.3 L13,2" stroke="#222" stroke-width="1.3"/></svg>
<svg class="a" style="left:403px;top:490px;" width="16" height="14" viewBox="0 0 16 14"><circle cx="7.5" cy="7.3" r="5.2" fill="none" stroke="#222" stroke-width="1.2"/><path d="M5.2,10 L7.5,4.5 L9.8,10 M6,8.5 H9" fill="none" stroke="#222" stroke-width="1.1"/></svg>
<svg class="a" style="left:403px;top:512px;" width="16" height="14" viewBox="0 0 16 14"><rect x="2.2" y="2.5" width="10.8" height="9" rx="1.5" fill="none" stroke="#222" stroke-width="1.2"/><path d="M2.2,5 H13" stroke="#222" stroke-width="1.1"/><circle cx="10.5" cy="8.5" r="0.7" fill="#222"/></svg>
<svg class="a" style="left:403px;top:533px;" width="16" height="14" viewBox="0 0 16 14"><g transform="rotate(-35 8 7.5)"><rect x="1.5" y="5" width="7.5" height="5" rx="2.5" fill="none" stroke="#222" stroke-width="1.2"/><rect x="6.5" y="5" width="7.5" height="5" rx="2.5" fill="none" stroke="#222" stroke-width="1.2"/></g></svg>
<svg class="a" style="left:403px;top:640px;" width="16" height="14" viewBox="0 0 16 14"><path d="M1.5,2.5 H3.5 L5,9.5 H12 L13,4.5 H4" fill="none" stroke="#222" stroke-width="1.2" stroke-linejoin="round"/><circle cx="6" cy="12" r="0.9" fill="#222"/><circle cx="11" cy="12" r="0.9" fill="#222"/></svg>
<svg class="a" style="left:403px;top:671px;" width="16" height="14" viewBox="0 0 16 14"><rect x="2.5" y="3" width="10.5" height="9" rx="1" fill="#222"/><path d="M6,6 L4.8,7.5 L6,9 M9.5,6 L10.7,7.5 L9.5,9" fill="none" stroke="#fff" stroke-width="0.9"/></svg>
<svg class="a" style="left:403px;top:692px;" width="16" height="14" viewBox="0 0 16 14"><rect x="2" y="4" width="12" height="7" rx="3.5" fill="none" stroke="#222" stroke-width="1.2"/><circle cx="5.6" cy="7.5" r="2" fill="#222"/></svg>
<svg class="a" style="left:403px;top:727px;" width="16" height="14" viewBox="0 0 16 14"><path d="M3.5,3 H12.5 L13,6 H3 Z" fill="#222" stroke="#222" stroke-width="1"/><path d="M3.8,6.5 V12 H12.2 V6.5" fill="#222"/><rect x="5.5" y="7.5" width="5" height="1.8" fill="#fff"/></svg>
<div class="a" style="left:603px;top:371px;width:686.5px;height:111.5px;box-sizing:border-box;border:1.25px solid #555;background:#fff;"></div>
<div class="a" style="left:604.5px;top:429.5px;width:683.5px;height:51.5px;background:#f5f7fb;"></div>
<svg class="a" style="left:617px;top:381px;" width="14" height="14" viewBox="0 0 14 14"><path d="M2.8,2.8 H11.2 L11.7,5.8 H2.3 Z" fill="#222" stroke="#222" stroke-width="1"/><path d="M3,6.3 V11.5 H11 V6.3" fill="#222"/><rect x="4.8" y="7.3" width="4.4" height="2" fill="#fff"/></svg>
<div class="t" style="left:635.10px;top:384.00px;font-size:9.60px;letter-spacing:-0.331px;color:#333;">Connected account</div>
<svg class="a" style="left:608px;top:398px;" width="106" height="28" viewBox="0 0 106 28"><path d="M10.50,16.95 Q11.92,15.67 13.70,12.70 L17.47,8.96 Q18.33,8.02 17.97,10.57 L17.76,16.52 Q19.04,15.67 20.82,12.70 L24.59,8.96 Q25.45,8.02 25.09,10.57 L24.88,16.52 Q26.16,15.67 27.94,12.70 L31.71,8.96 Q32.56,8.02 32.21,10.57 L31.99,16.52 Q33.27,15.67 35.05,12.70 L38.83,8.96 Q39.68,8.02 39.32,10.57 L39.11,16.52 Q40.39,15.67 42.17,12.70 L45.94,8.96 Q46.80,8.02 46.44,10.57 L46.23,16.52 Q47.51,15.67 49.29,12.70 L53.06,8.96 Q53.91,8.02 53.56,10.57 L53.35,16.52 Q54.63,15.67 56.41,12.70 L60.18,8.96 Q61.03,8.02 60.68,10.57 L60.46,16.52 Q61.74,15.67 63.52,12.70 L67.29,8.96 Q68.15,8.02 67.79,10.57 L67.58,16.52 Q68.86,15.67 70.64,12.70 L74.41,8.96 Q75.27,8.02 74.91,10.57 L74.70,16.52 Q75.98,15.67 77.76,12.70 L81.53,8.96 Q82.38,8.02 82.03,10.57 L81.81,16.52 Q83.09,15.67 84.87,12.70 L88.65,8.96 Q89.50,8.02 89.14,10.57" fill="none" stroke="#1a1a1a" stroke-width="1.2" stroke-linecap="round" stroke-linejoin="round"/><rect x="7" y="5.2" width="89" height="17" fill="none" stroke="#9fb0ee" stroke-width="2.2"/><rect x="3.7" y="1.9000000000000004" width="6.6" height="6.6" fill="#fff" stroke="#9fb0ee" stroke-width="1.3"/><rect x="48.2" y="1.9000000000000004" width="6.6" height="6.6" fill="#fff" stroke="#9fb0ee" stroke-width="1.3"/><rect x="92.7" y="1.9000000000000004" width="6.6" height="6.6" fill="#fff" stroke="#9fb0ee" stroke-width="1.3"/><rect x="3.7" y="10.399999999999999" width="6.6" height="6.6" fill="#fff" stroke="#9fb0ee" stroke-width="1.3"/><rect x="92.7" y="10.399999999999999" width="6.6" height="6.6" fill="#fff" stroke="#9fb0ee" stroke-width="1.3"/><rect x="3.7" y="18.9" width="6.6" height="6.6" fill="#fff" stroke="#9fb0ee" stroke-width="1.3"/><rect x="48.2" y="18.9" width="6.6" height="6.6" fill="#fff" stroke="#9fb0ee" stroke-width="1.3"/><rect x="92.7" y="18.9" width="6.6" height="6.6" fill="#fff" stroke="#9fb0ee" stroke-width="1.3"/></svg>
<div class="a" style="left:707px;top:404px;width:60.4px;height:15.3px;box-sizing:border-box;border:1.2px solid #70c283;"></div>
<div class="t" style="left:720.40px;top:409.00px;font-size:8.50px;letter-spacing:-0.741px;color:#7ac88c;">VERIFIED</div>
<div class="t" style="left:619.30px;top:443.00px;font-size:10.20px;letter-spacing:-0.263px;color:#2a2a2a;">Payments</div>
<div class="t" style="left:635.40px;top:459.00px;font-size:10.80px;letter-spacing:-0.473px;color:#2a2a2a;">Enabled</div>
<div class="t" style="left:708.60px;top:443.00px;font-size:10.20px;letter-spacing:-0.395px;color:#2a2a2a;">Payouts</div>
<div class="t" style="left:725.20px;top:459.00px;font-size:10.80px;letter-spacing:-0.545px;color:#2a2a2a;">Manual</div>
<svg class="a" style="left:617.5px;top:457.5px;" width="13" height="13" viewBox="0 0 13 13"><circle cx="6.5" cy="6.5" r="5.5" fill="#67c07b"/><path d="M4,6.7 L5.9,8.4 L9,5" fill="none" stroke="#fff" stroke-width="1.2" stroke-linecap="round"/></svg>
<svg class="a" style="left:707.1px;top:457.5px;" width="13" height="13" viewBox="0 0 13 13"><circle cx="6.5" cy="6.5" r="5.5" fill="#67c07b"/><path d="M4,6.7 L5.9,8.4 L9,5" fill="none" stroke="#fff" stroke-width="1.2" stroke-linecap="round"/></svg>
<div class="a" style="left:690.9px;top:441.6px;width:1.3px;height:30.5px;background:#333;"></div>
<div class="a" style="left:776.8px;top:441.6px;width:1.3px;height:30.5px;background:#333;"></div>
<div class="a" style="left:890.1px;top:441.6px;width:1.3px;height:30.5px;background:#333;"></div>
<div class="t" style="left:794.40px;top:443.00px;font-size:10.20px;letter-spacing:-0.011px;color:#2a2a2a;">Total balance</div>
<div class="t" style="left:795.00px;top:459.00px;font-size:10.80px;letter-spacing:-0.485px;color:#2a2a2a;">$150.00 USD</div>
<div class="t" style="left:907.60px;top:443.00px;font-size:10.20px;color:#2a2a2a;">Lifetime volume</div>
<div class="t" style="left:908.00px;top:459.00px;font-size:10.80px;letter-spacing:-0.323px;color:#2a2a2a;">$ 5550.00 USD</div>
<div class="a" style="left:861.3px;top:458.3px;width:11.5px;height:11.4px;box-sizing:border-box;border:1px solid #999;border-radius:2px;"></div>
<div class="t" style="left:866.10px;top:462.00px;font-size:7.00px;color:#333;">i</div>
<div class="a" style="left:984.7px;top:458.3px;width:11.5px;height:11.4px;box-sizing:border-box;border:1px solid #999;border-radius:2px;"></div>
<div class="t" style="left:989.50px;top:462.00px;font-size:7.00px;color:#333;">i</div>
<svg class="a" style="left:1145px;top:380px;" width="132" height="16" viewBox="0 0 132 16"><path d="M2.30,12.00 Q3.72,10.95 5.51,8.50 L9.28,5.42 Q10.14,4.65 9.78,6.75 L9.57,11.65 Q10.85,10.95 12.63,8.50 L16.40,5.42 Q17.26,4.65 16.90,6.75 L16.69,11.65 Q17.97,10.95 19.75,8.50 L23.53,5.42 Q24.38,4.65 24.03,6.75 L23.81,11.65 Q25.10,10.95 26.88,8.50 L30.65,5.42 Q31.51,4.65 31.15,6.75 L30.94,11.65 Q32.22,10.95 34.00,8.50 L37.77,5.42 Q38.63,4.65 38.27,6.75 L38.06,11.65 Q39.34,10.95 41.12,8.50 L44.90,5.42 Q45.75,4.65 45.40,6.75 L45.18,11.65 Q46.47,10.95 48.25,8.50 L52.02,5.42 Q52.88,4.65 52.52,6.75 L52.31,11.65 Q53.59,10.95 55.37,8.50 L59.15,5.42 Q60.00,4.65 59.64,6.75" fill="none" stroke="#222" stroke-width="1.05" stroke-linecap="round" stroke-linejoin="round"/><path d="M65.00,12.00 Q66.37,10.95 68.07,8.50 L71.69,5.42 Q72.51,4.65 72.17,6.75 L71.97,11.65 Q73.20,10.95 74.90,8.50 L78.52,5.42 Q79.34,4.65 79.00,6.75 L78.80,11.65 Q80.02,10.95 81.73,8.50 L85.35,5.42 Q86.17,4.65 85.83,6.75 L85.62,11.65 Q86.85,10.95 88.56,8.50 L92.18,5.42 Q93.00,4.65 92.66,6.75" fill="none" stroke="#222" stroke-width="1.05" stroke-linecap="round" stroke-linejoin="round"/><path d="M98.00,12.00 Q99.46,10.95 101.29,8.50 L105.17,5.42 Q106.05,4.65 105.68,6.75 L105.46,11.65 Q106.78,10.95 108.61,8.50 L112.49,5.42 Q113.37,4.65 113.00,6.75 L112.78,11.65 Q114.10,10.95 115.93,8.50 L119.80,5.42 Q120.68,4.65 120.32,6.75 L120.10,11.65 Q121.41,10.95 123.24,8.50 L127.12,5.42 Q128.00,4.65 127.63,6.75" fill="none" stroke="#222" stroke-width="1.05" stroke-linecap="round" stroke-linejoin="round"/></svg>
<div class="a" style="left:1251.3px;top:400px;width:21px;height:20.6px;box-sizing:border-box;border:1.2px solid #444;border-radius:2px;"></div>
<svg class="a" style="left:1251px;top:400px;" width="22" height="21" viewBox="0 0 22 21"><circle cx="6.6" cy="10.3" r="1.3" fill="#222"/><circle cx="10.9" cy="10.3" r="1.3" fill="#222"/><circle cx="15.2" cy="10.3" r="1.3" fill="#222"/></svg>
<div class="a" style="left:602.3px;top:490.5px;width:687px;height:145px;box-sizing:border-box;border:1.25px solid #555;background:#fff;"></div>
<svg class="a" style="left:614px;top:502px;" width="90" height="20" viewBox="0 0 90 20"><path d="M4.70,13.75 Q6.12,12.47 7.90,9.50 L11.67,5.76 Q12.52,4.83 12.16,7.38 L11.95,13.32 Q13.23,12.47 15.01,9.50 L18.77,5.76 Q19.63,4.83 19.27,7.38 L19.06,13.32 Q20.34,12.47 22.11,9.50 L25.88,5.76 Q26.74,4.83 26.38,7.38 L26.17,13.32 Q27.45,12.47 29.22,9.50 L32.99,5.76 Q33.84,4.83 33.49,7.38 L33.27,13.32 Q34.55,12.47 36.33,9.50 L40.10,5.76 Q40.95,4.83 40.60,7.38 L40.38,13.32 Q41.66,12.47 43.44,9.50 L47.21,5.76 Q48.06,4.83 47.70,7.38 L47.49,13.32 Q48.77,12.47 50.55,9.50 L54.31,5.76 Q55.17,4.83 54.81,7.38 L54.60,13.32 Q55.88,12.47 57.66,9.50 L61.42,5.76 Q62.28,4.83 61.92,7.38 L61.71,13.32 Q62.99,12.47 64.76,9.50 L68.53,5.76 Q69.38,4.83 69.03,7.38 L68.82,13.32 Q70.09,12.47 71.87,9.50 L75.64,5.76 Q76.49,4.83 76.14,7.38 L75.92,13.32 Q77.20,12.47 78.98,9.50 L82.75,5.76 Q83.60,4.83 83.24,7.38" fill="none" stroke="#222" stroke-width="1.15" stroke-linecap="round" stroke-linejoin="round"/></svg>
<div class="a" style="left:613px;top:532px;width:660.6px;height:1.3px;background:#444;"></div>
<div class="a" style="left:1226.4px;top:498.6px;width:47.2px;height:20px;box-sizing:border-box;border:1.3px solid #333;border-radius:4px;box-shadow:1px 1.5px 0 #bbb;"></div>
<svg class="a" style="left:1234px;top:502px;" width="14" height="14" viewBox="0 0 14 14"><path d="M2.5,11.5 L3.3,8.5 L9.5,2.3 L11.7,4.5 L5.5,10.7 Z" fill="#222"/></svg>
<div class="t" style="left:1249.50px;top:504.00px;font-size:9.50px;letter-spacing:-0.296px;color:#333;">Edit</div>
<div class="t" style="left:619.50px;top:549.00px;font-size:10.20px;letter-spacing:-0.078px;color:#2a2a2a;">Name</div>
<div class="t" style="left:619.50px;top:570.00px;font-size:10.20px;letter-spacing:0.055px;color:#2a2a2a;">Date of birth</div>
<div class="t" style="left:619.50px;top:591.00px;font-size:10.20px;letter-spacing:-0.630px;color:#2a2a2a;">SSN</div>
<div class="t" style="left:619.50px;top:613.00px;font-size:10.20px;color:#2a2a2a;">Identity document</div>
<div class="t" style="left:947.60px;top:549.00px;font-size:10.20px;letter-spacing:-0.051px;color:#2a2a2a;">Email address</div>
<div class="t" style="left:947.60px;top:570.00px;font-size:10.20px;letter-spacing:-0.037px;color:#2a2a2a;">Phone number</div>
<div class="t" style="left:947.60px;top:591.00px;font-size:10.20px;letter-spacing:-0.122px;color:#2a2a2a;">Address</div>
<svg class="a" style="left:738px;top:542px;" width="90" height="85" viewBox="0 0 90 85"><path d="M3.00,14.50 Q4.41,13.30 6.18,10.50 L9.93,6.98 Q10.78,6.10 10.43,8.50 L10.21,14.10 Q11.49,13.30 13.25,10.50 L17.00,6.98 Q17.85,6.10 17.50,8.50 L17.29,14.10 Q18.56,13.30 20.33,10.50 L24.07,6.98 Q24.92,6.10 24.57,8.50 L24.36,14.10 Q25.63,13.30 27.40,10.50 L31.15,6.98 Q32.00,6.10 31.64,8.50 L31.43,14.10 Q32.70,13.30 34.47,10.50 L38.22,6.98 Q39.07,6.10 38.71,8.50 L38.50,14.10 Q39.77,13.30 41.54,10.50 L45.29,6.98 Q46.14,6.10 45.79,8.50 L45.57,14.10 Q46.85,13.30 48.61,10.50 L52.36,6.98 Q53.21,6.10 52.86,8.50 L52.65,14.10 Q53.92,13.30 55.69,10.50 L59.44,6.98 Q60.28,6.10 59.93,8.50 L59.72,14.10 Q60.99,13.30 62.76,10.50 L66.51,6.98 Q67.36,6.10 67.00,8.50 L66.79,14.10 Q68.06,13.30 69.83,10.50 L73.58,6.98 Q74.43,6.10 74.07,8.50 L73.86,14.10 Q75.14,13.30 76.90,10.50 L80.65,6.98 Q81.50,6.10 81.15,8.50" fill="none" stroke="#222" stroke-width="0.95" stroke-linecap="round" stroke-linejoin="round"/><path d="M3.00,35.00 Q4.46,33.80 6.28,31.00 L10.14,27.48 Q11.01,26.60 10.65,29.00 L10.43,34.60 Q11.74,33.80 13.56,31.00 L17.42,27.48 Q18.30,26.60 17.93,29.00 L17.71,34.60 Q19.02,33.80 20.85,31.00 L24.71,27.48 Q25.58,26.60 25.22,29.00 L25.00,34.60 Q26.31,33.80 28.13,31.00 L31.99,27.48 Q32.86,26.60 32.50,29.00 L32.28,34.60 Q33.59,33.80 35.41,31.00 L39.27,27.48 Q40.15,26.60 39.78,29.00 L39.57,34.60 Q40.88,33.80 42.70,31.00 L46.56,27.48 Q47.43,26.60 47.07,29.00 L46.85,34.60 Q48.16,33.80 49.98,31.00 L53.84,27.48 Q54.72,26.60 54.35,29.00 L54.13,34.60 Q55.44,33.80 57.27,31.00 L61.13,27.48 Q62.00,26.60 61.64,29.00" fill="none" stroke="#222" stroke-width="0.95" stroke-linecap="round" stroke-linejoin="round"/><path d="M3.00,56.50 Q4.58,55.30 6.56,52.50 L10.76,48.98 Q11.71,48.10 11.32,50.50 L11.08,56.10 Q12.51,55.30 14.49,52.50 L18.68,48.98 Q19.64,48.10 19.24,50.50 L19.00,56.10 Q20.43,55.30 22.41,52.50 L26.61,48.98 Q27.56,48.10 27.16,50.50 L26.92,56.10 Q28.35,55.30 30.33,52.50 L34.53,48.98 Q35.48,48.10 35.08,50.50 L34.84,56.10 Q36.27,55.30 38.25,52.50 L42.45,48.98 Q43.40,48.10 43.00,50.50" fill="none" stroke="#222" stroke-width="0.95" stroke-linecap="round" stroke-linejoin="round"/><path d="M3.00,78.00 Q4.50,76.80 6.37,74.00 L10.34,70.48 Q11.24,69.60 10.87,72.00 L10.64,77.60 Q11.99,76.80 13.87,74.00 L17.84,70.48 Q18.74,69.60 18.36,72.00 L18.14,77.60 Q19.49,76.80 21.36,74.00 L25.33,70.48 Q26.23,69.60 25.86,72.00 L25.63,77.60 Q26.98,76.80 28.85,74.00 L32.83,70.48 Q33.72,69.60 33.35,72.00 L33.13,77.60 Q34.47,76.80 36.35,74.00 L40.32,70.48 Q41.22,69.60 40.84,72.00 L40.62,77.60 Q41.97,76.80 43.84,74.00 L47.81,70.48 Q48.71,69.60 48.34,72.00 L48.11,77.60 Q49.46,76.80 51.34,74.00 L55.31,70.48 Q56.21,69.60 55.83,72.00 L55.61,77.60 Q56.96,76.80 58.83,74.00 L62.80,70.48 Q63.70,69.60 63.33,72.00" fill="none" stroke="#222" stroke-width="0.95" stroke-linecap="round" stroke-linejoin="round"/></svg>
<svg class="a" style="left:1066px;top:542px;" width="145" height="85" viewBox="0 0 145 85"><path d="M3.00,14.50 Q4.52,13.30 6.43,10.50 L10.47,6.98 Q11.39,6.10 11.00,8.50 L10.78,14.10 Q12.15,13.30 14.05,10.50 L18.10,6.98 Q19.01,6.10 18.63,8.50 L18.40,14.10 Q19.77,13.30 21.68,10.50 L25.72,6.98 Q26.63,6.10 26.25,8.50 L26.02,14.10 Q27.40,13.30 29.30,10.50 L33.34,6.98 Q34.26,6.10 33.88,8.50 L33.65,14.10 Q35.02,13.30 36.93,10.50 L40.97,6.98 Q41.88,6.10 41.50,8.50 L41.27,14.10 Q42.64,13.30 44.55,10.50 L48.59,6.98 Q49.50,6.10 49.12,8.50 L48.90,14.10 Q50.27,13.30 52.17,10.50 L56.21,6.98 Q57.13,6.10 56.75,8.50 L56.52,14.10 Q57.89,13.30 59.80,10.50 L63.84,6.98 Q64.75,6.10 64.37,8.50 L64.14,14.10 Q65.51,13.30 67.42,10.50 L71.46,6.98 Q72.38,6.10 72.00,8.50 L71.77,14.10 Q73.14,13.30 75.04,10.50 L79.09,6.98 Q80.00,6.10 79.62,8.50" fill="none" stroke="#222" stroke-width="0.95" stroke-linecap="round" stroke-linejoin="round"/><path d="M86.00,14.50 Q87.49,13.30 89.35,10.50 L93.30,6.98 Q94.20,6.10 93.82,8.50 L93.60,14.10 Q94.94,13.30 96.80,10.50 L100.75,6.98 Q101.65,6.10 101.27,8.50 L101.05,14.10 Q102.39,13.30 104.25,10.50 L108.20,6.98 Q109.10,6.10 108.73,8.50 L108.50,14.10 Q109.84,13.30 111.71,10.50 L115.65,6.98 Q116.55,6.10 116.18,8.50 L115.95,14.10 Q117.29,13.30 119.16,10.50 L123.11,6.98 Q124.00,6.10 123.63,8.50" fill="none" stroke="#222" stroke-width="0.95" stroke-linecap="round" stroke-linejoin="round"/><path d="M3.00,35.00 Q4.48,33.80 6.33,31.00 L10.26,27.48 Q11.15,26.60 10.78,29.00 L10.56,34.60 Q11.89,33.80 13.74,31.00 L17.67,27.48 Q18.56,26.60 18.19,29.00 L17.96,34.60 Q19.30,33.80 21.15,31.00 L25.07,27.48 Q25.96,26.60 25.59,29.00 L25.37,34.60 Q26.70,33.80 28.56,31.00 L32.48,27.48 Q33.37,26.60 33.00,29.00 L32.78,34.60 Q34.11,33.80 35.96,31.00 L39.89,27.48 Q40.78,26.60 40.41,29.00 L40.19,34.60 Q41.52,33.80 43.37,31.00 L47.30,27.48 Q48.19,26.60 47.81,29.00 L47.59,34.60 Q48.93,33.80 50.78,31.00 L54.70,27.48 Q55.59,26.60 55.22,29.00 L55.00,34.60 Q56.33,33.80 58.19,31.00 L62.11,27.48 Q63.00,26.60 62.63,29.00" fill="none" stroke="#222" stroke-width="0.95" stroke-linecap="round" stroke-linejoin="round"/><path d="M3.00,56.50 Q4.54,55.30 6.48,52.50 L10.57,48.98 Q11.50,48.10 11.11,50.50 L10.88,56.10 Q12.27,55.30 14.20,52.50 L18.29,48.98 Q19.22,48.10 18.83,50.50 L18.60,56.10 Q19.99,55.30 21.92,52.50 L26.01,48.98 Q26.94,48.10 26.55,50.50 L26.32,56.10 Q27.71,55.30 29.64,52.50 L33.74,48.98 Q34.66,48.10 34.28,50.50 L34.05,56.10 Q35.44,55.30 37.37,52.50 L41.46,48.98 Q42.39,48.10 42.00,50.50 L41.77,56.10 Q43.16,55.30 45.09,52.50 L49.18,48.98 Q50.11,48.10 49.72,50.50 L49.49,56.10 Q50.88,55.30 52.81,52.50 L56.90,48.98 Q57.83,48.10 57.45,50.50 L57.21,56.10 Q58.60,55.30 60.53,52.50 L64.63,48.98 Q65.55,48.10 65.17,50.50 L64.94,56.10 Q66.33,55.30 68.26,52.50 L72.35,48.98 Q73.28,48.10 72.89,50.50 L72.66,56.10 Q74.05,55.30 75.98,52.50 L80.07,48.98 Q81.00,48.10 80.61,50.50" fill="none" stroke="#222" stroke-width="0.95" stroke-linecap="round" stroke-linejoin="round"/><path d="M87.00,56.50 Q88.61,55.30 90.63,52.50 L94.90,48.98 Q95.87,48.10 95.47,50.50 L95.23,56.10 Q96.68,55.30 98.69,52.50 L102.97,48.98 Q103.94,48.10 103.53,50.50 L103.29,56.10 Q104.74,55.30 106.76,52.50 L111.03,48.98 Q112.00,48.10 111.60,50.50" fill="none" stroke="#222" stroke-width="0.95" stroke-linecap="round" stroke-linejoin="round"/><path d="M3.00,78.00 Q4.52,76.80 6.43,74.00 L10.47,70.48 Q11.39,69.60 11.00,72.00 L10.78,77.60 Q12.15,76.80 14.05,74.00 L18.10,70.48 Q19.01,69.60 18.63,72.00 L18.40,77.60 Q19.77,76.80 21.68,74.00 L25.72,70.48 Q26.63,69.60 26.25,72.00 L26.02,77.60 Q27.40,76.80 29.30,74.00 L33.34,70.48 Q34.26,69.60 33.88,72.00 L33.65,77.60 Q35.02,76.80 36.93,74.00 L40.97,70.48 Q41.88,69.60 41.50,72.00 L41.27,77.60 Q42.64,76.80 44.55,74.00 L48.59,70.48 Q49.50,69.60 49.12,72.00 L48.90,77.60 Q50.27,76.80 52.17,74.00 L56.21,70.48 Q57.13,69.60 56.75,72.00 L56.52,77.60 Q57.89,76.80 59.80,74.00 L63.84,70.48 Q64.75,69.60 64.37,72.00 L64.14,77.60 Q65.51,76.80 67.42,74.00 L71.46,70.48 Q72.38,69.60 72.00,72.00 L71.77,77.60 Q73.14,76.80 75.04,74.00 L79.09,70.48 Q80.00,69.60 79.62,72.00" fill="none" stroke="#222" stroke-width="0.95" stroke-linecap="round" stroke-linejoin="round"/><path d="M86.00,78.00 Q87.49,76.80 89.35,74.00 L93.30,70.48 Q94.20,69.60 93.82,72.00 L93.60,77.60 Q94.94,76.80 96.80,74.00 L100.75,70.48 Q101.65,69.60 101.27,72.00 L101.05,77.60 Q102.39,76.80 104.25,74.00 L108.20,70.48 Q109.10,69.60 108.73,72.00 L108.50,77.60 Q109.84,76.80 111.71,74.00 L115.65,70.48 Q116.55,69.60 116.18,72.00 L115.95,77.60 Q117.29,76.80 119.16,74.00 L123.11,70.48 Q124.00,69.60 123.63,72.00" fill="none" stroke="#222" stroke-width="0.95" stroke-linecap="round" stroke-linejoin="round"/><path d="M129.00,78.00 Q130.14,76.80 131.57,74.00 L134.60,70.48 Q135.29,69.60 135.00,72.00 L134.83,77.60 Q135.86,76.80 137.29,74.00 L140.31,70.48 Q141.00,69.60 140.71,72.00" fill="none" stroke="#222" stroke-width="0.95" stroke-linecap="round" stroke-linejoin="round"/></svg>
<div class="a" style="left:602.3px;top:645.5px;width:687px;height:105px;box-sizing:border-box;border:1.25px solid #555;background:#fff;"></div>
<svg class="a" style="left:612px;top:658px;" width="90" height="20" viewBox="0 0 90 20"><path d="M4.30,14.75 Q5.85,13.47 7.79,10.50 L11.90,6.76 Q12.83,5.83 12.44,8.38 L12.21,14.32 Q13.60,13.47 15.54,10.50 L19.65,6.76 Q20.58,5.83 20.19,8.38 L19.96,14.32 Q21.36,13.47 23.29,10.50 L27.40,6.76 Q28.33,5.83 27.95,8.38 L27.71,14.32 Q29.11,13.47 31.05,10.50 L35.15,6.76 Q36.09,5.83 35.70,8.38 L35.46,14.32 Q36.86,13.47 38.80,10.50 L42.91,6.76 Q43.84,5.83 43.45,8.38 L43.22,14.32 Q44.61,13.47 46.55,10.50 L50.66,6.76 Q51.59,5.83 51.20,8.38 L50.97,14.32 Q52.37,13.47 54.30,10.50 L58.41,6.76 Q59.34,5.83 58.95,8.38 L58.72,14.32 Q60.12,13.47 62.06,10.50 L66.16,6.76 Q67.10,5.83 66.71,8.38 L66.47,14.32 Q67.87,13.47 69.81,10.50 L73.92,6.76 Q74.85,5.83 74.46,8.38 L74.23,14.32 Q75.62,13.47 77.56,10.50 L81.67,6.76 Q82.60,5.83 82.21,8.38" fill="none" stroke="#222" stroke-width="1.15" stroke-linecap="round" stroke-linejoin="round"/></svg>
<div class="a" style="left:610.4px;top:689px;width:659.2px;height:1.3px;background:#444;"></div>
<div class="t" style="left:619.00px;top:703.00px;font-size:10.20px;letter-spacing:0.014px;color:#2a2a2a;">Total balance</div>
<div class="t" style="left:619.00px;top:723.00px;font-size:10.80px;letter-spacing:0.826px;color:#2a2a2a;">$300.00</div>
<div class="t" style="left:741.00px;top:703.00px;font-size:10.20px;letter-spacing:-0.113px;color:#2a2a2a;">Available to pay out</div>
<div class="t" style="left:743.30px;top:723.00px;font-size:10.80px;letter-spacing:0.326px;color:#2a2a2a;">$100.00</div>
<div class="t" style="left:864.80px;top:703.00px;font-size:10.20px;letter-spacing:-0.073px;color:#2a2a2a;">Available soon</div>
<div class="t" style="left:864.80px;top:723.00px;font-size:10.80px;letter-spacing:0.460px;color:#2a2a2a;">$130.00</div>
<div class="t" style="left:985.00px;top:703.00px;font-size:10.20px;letter-spacing:0.031px;color:#2a2a2a;">In transit to bank</div>
<div class="t" style="left:986.60px;top:723.00px;font-size:10.80px;letter-spacing:0.470px;color:#2a2a2a;">$70.00</div>
<div class="a" style="left:1158.4px;top:654.4px;width:83.2px;height:20.6px;box-sizing:border-box;border:1.3px solid #333;border-radius:4px;box-shadow:1px 1.5px 0 #bbb;"></div>
<svg class="a" style="left:1168px;top:657px;" width="16" height="15" viewBox="0 0 16 15"><path d="M4.5,12.5 V3 M2.3,5.2 L4.5,2.8 L6.7,5.2 M10,2.8 V12.3 M7.8,10 L10,12.5 L12.2,10" fill="none" stroke="#222" stroke-width="1.4" stroke-linecap="round" stroke-linejoin="round"/></svg>
<div class="t" style="left:1184.50px;top:660.00px;font-size:9.50px;letter-spacing:-0.430px;color:#333;">Send funds</div>
<div class="a" style="left:1253.6px;top:654.4px;width:21.4px;height:21.2px;box-sizing:border-box;border:1.2px solid #444;border-radius:2px;"></div>
<svg class="a" style="left:1253.6px;top:654.4px;" width="22" height="21" viewBox="0 0 22 21"><circle cx="6.6" cy="10.6" r="1.3" fill="#222"/><circle cx="10.9" cy="10.6" r="1.3" fill="#222"/><circle cx="15.2" cy="10.6" r="1.3" fill="#222"/></svg>
<div class="a" style="left:602.3px;top:760.7px;width:687px;height:178.3px;box-sizing:border-box;border:1.25px solid #555;background:#fff;"></div>
<svg class="a" style="left:610px;top:770px;" width="56" height="20" viewBox="0 0 56 20"><path d="M3.60,13.45 Q5.13,12.17 7.04,9.20 L11.09,5.46 Q12.00,4.52 11.62,7.07 L11.39,13.02 Q12.77,12.17 14.68,9.20 L18.73,5.46 Q19.64,4.52 19.26,7.07 L19.03,13.02 Q20.41,12.17 22.32,9.20 L26.37,5.46 Q27.28,4.52 26.90,7.07 L26.67,13.02 Q28.05,12.17 29.96,9.20 L34.00,5.46 Q34.92,4.52 34.54,7.07 L34.31,13.02 Q35.69,12.17 37.60,9.20 L41.64,5.46 Q42.56,4.52 42.18,7.07 L41.95,13.02 Q43.32,12.17 45.23,9.20 L49.28,5.46 Q50.20,4.52 49.82,7.07" fill="none" stroke="#222" stroke-width="1.15" stroke-linecap="round" stroke-linejoin="round"/></svg>
<div class="a" style="left:610.8px;top:798px;width:658.9px;height:1.3px;background:#444;"></div>
<div class="a" style="left:614.2px;top:813.7px;width:282.4px;height:19.2px;box-sizing:border-box;border:1.3px solid #333;border-radius:4px;background:#fff;overflow:hidden;box-shadow:1px 1.5px 0 #bbb;"><div style="position:absolute;left:0;top:0;width:68.2px;height:100%;background:#9db5ee;"></div><div style="position:absolute;left:67.5px;top:0;width:1.2px;height:100%;background:#444"></div><div style="position:absolute;left:133px;top:0;width:1.2px;height:100%;background:#444"></div><div style="position:absolute;left:190.3px;top:0;width:1.2px;height:100%;background:#444"></div></div>
<div class="t" style="left:623.20px;top:817.00px;font-size:10.80px;letter-spacing:0.285px;color:#222;">Payments</div>
<div class="t" style="left:690.80px;top:817.00px;font-size:10.80px;letter-spacing:0.350px;color:#222;">Transfers</div>
<div class="t" style="left:756.50px;top:817.00px;font-size:10.80px;letter-spacing:0.076px;color:#222;">Payouts</div>
<div class="t" style="left:813.80px;top:817.00px;font-size:10.80px;letter-spacing:0.429px;color:#222;">Collected fees</div>
<svg class="a" style="left:615.2px;top:846.1px;" width="659" height="78" viewBox="0 0 659 78"><rect x="0.6" y="0.6" width="657.8" height="76" fill="#fff" stroke="#444" stroke-width="1.2"/><rect x="1.2" y="1.2" width="656.6" height="11.3" fill="#cdcdcd"/><rect x="1.2" y="12.5" width="656.6" height="19.5" fill="#ececec"/><rect x="1.2" y="52" width="656.6" height="20" fill="#ececec"/><path d="M0.6,12.5 H658.4" stroke="#444" stroke-width="1.2"/><path d="M101.9,0.6 V76.6" stroke="#444" stroke-width="1.1"/><path d="M199.0,0.6 V76.6" stroke="#444" stroke-width="1.1"/><path d="M458.4,0.6 V76.6" stroke="#444" stroke-width="1.1"/><path d="M556.0,0.6 V76.6" stroke="#444" stroke-width="1.1"/></svg>
<div class="t" style="left:620.90px;top:849.00px;font-size:8.80px;letter-spacing:-0.430px;color:#333;">AMOUNT</div>
<div class="t" style="left:718.50px;top:849.00px;font-size:8.80px;letter-spacing:-0.085px;color:#333;">BANK ACCOUNT</div>
<div class="t" style="left:815.60px;top:849.00px;font-size:8.80px;letter-spacing:-0.166px;color:#333;">ESTIMATED ARRIVAL</div>
<div class="t" style="left:1074.70px;top:849.00px;font-size:8.80px;letter-spacing:0.700px;color:#333;">ID</div>
<div class="t" style="left:1172.20px;top:849.00px;font-size:8.80px;letter-spacing:-0.088px;color:#333;">DATE INITIATED</div>
<div class="t" style="left:621.00px;top:864.00px;font-size:9.30px;letter-spacing:-0.092px;color:#2a2a2a;">$50.00</div>
<div class="t" style="left:720.50px;top:864.00px;font-size:9.30px;letter-spacing:-0.510px;color:#2a2a2a;">USD Robobank ..... 741</div>
<div class="t" style="left:818.70px;top:864.00px;font-size:9.30px;letter-spacing:-0.350px;color:#2a2a2a;">Expected on Jun 15 2018</div>
<div class="t" style="left:1077.60px;top:864.00px;font-size:9.30px;letter-spacing:0.023px;color:#2a2a2a;">po_34243534523535</div>
<div class="t" style="left:1174.30px;top:864.00px;font-size:9.30px;letter-spacing:-0.355px;color:#2a2a2a;">Jun 13 2018 3:45 PM</div>
<div class="t" style="left:621.00px;top:884.00px;font-size:9.30px;letter-spacing:-0.192px;color:#2a2a2a;">$67.00</div>
<div class="t" style="left:720.50px;top:884.00px;font-size:9.30px;letter-spacing:-0.422px;color:#2a2a2a;">USD Unicredit ..... 7412</div>
<div class="t" style="left:818.70px;top:884.00px;font-size:9.30px;letter-spacing:-0.350px;color:#2a2a2a;">Expected on Jun 18 2018</div>
<div class="t" style="left:1077.60px;top:884.00px;font-size:9.30px;letter-spacing:-0.121px;color:#2a2a2a;">po_34243532222215</div>
<div class="t" style="left:1174.30px;top:884.00px;font-size:9.30px;letter-spacing:-0.355px;color:#2a2a2a;">Jun 13 2018 3:45 PM</div>
<div class="t" style="left:621.00px;top:904.00px;font-size:9.30px;letter-spacing:-0.270px;color:#2a2a2a;">$150.00</div>
<div class="t" style="left:720.50px;top:904.00px;font-size:9.30px;letter-spacing:-0.422px;color:#2a2a2a;">USD Unicredit ..... 7412</div>
<div class="t" style="left:818.70px;top:904.00px;font-size:9.30px;letter-spacing:-0.273px;color:#2a2a2a;">Expected on Jun 20 2018</div>
<div class="t" style="left:1077.60px;top:904.00px;font-size:9.30px;letter-spacing:-0.121px;color:#2a2a2a;">po_13434444523537</div>
<div class="t" style="left:1174.30px;top:904.00px;font-size:9.30px;letter-spacing:-0.355px;color:#2a2a2a;">Jun 13 2018 3:45 PM</div>
<div class="a" style="left:493.5px;top:345px;width:1.3px;height:1.3px;background:#9a9a9a;border-radius:50%;"></div>
<div class="a" style="left:1277px;top:391px;width:1.3px;height:1.3px;background:#9a9a9a;border-radius:50%;"></div>
<div class="a" style="left:701px;top:516px;width:1.3px;height:1.3px;background:#9a9a9a;border-radius:50%;"></div>
<div class="a" style="left:823.5px;top:556px;width:1.3px;height:1.3px;background:#9a9a9a;border-radius:50%;"></div>
<div class="a" style="left:1195.5px;top:556px;width:1.3px;height:1.3px;background:#9a9a9a;border-radius:50%;"></div>
<div class="a" style="left:699px;top:673px;width:1.3px;height:1.3px;background:#9a9a9a;border-radius:50%;"></div>
</body></html>
